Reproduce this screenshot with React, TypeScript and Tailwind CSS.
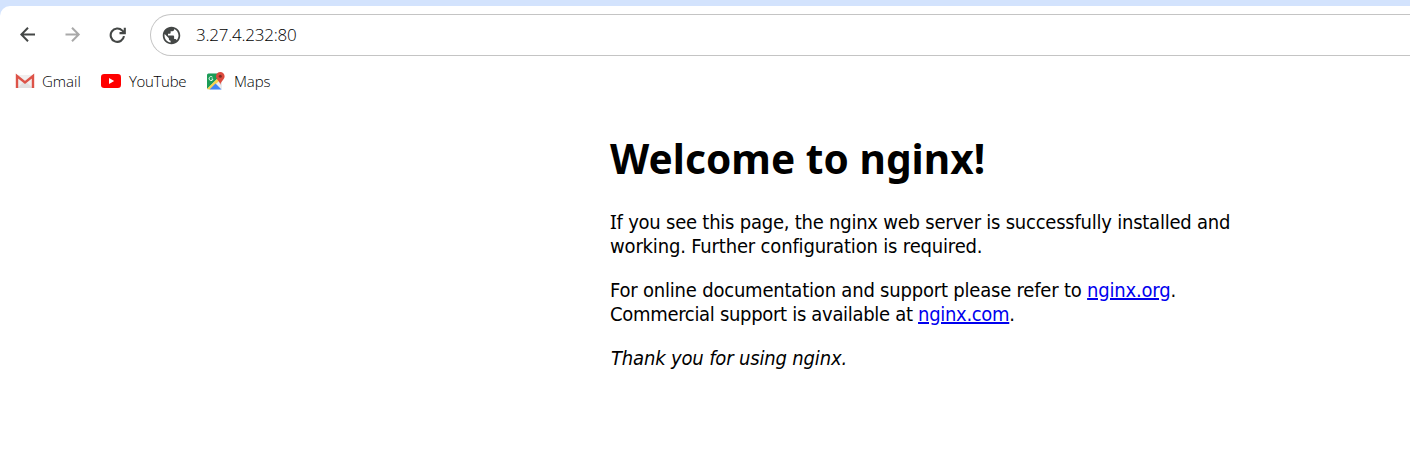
import React from "react";
import { MdPublic } from "react-icons/md";

const ui = "font-['Open_Sans','Noto_Sans',sans-serif]";

function Arrow({ flip, className }: { flip?: boolean; className: string }) {
  return (
    <svg width="16" height="16" viewBox="0 0 16 16" fill="none" stroke="currentColor" strokeWidth="2" className={className}>
      {flip ? <path d="M0.5 7.5H14M7 0.8L13.7 7.5L7 14.2" /> : <path d="M15 7.5H1.5M8 0.8L1.3 7.5L8 14.2" />}
    </svg>
  );
}

function Reload() {
  return (
    <svg width="17" height="17" viewBox="0 0 17 17" fill="none" stroke="currentColor" strokeWidth="2.1" className="text-[#444746]">
      <path d="M15 9.2A6.7 6.7 0 1 1 13.3 3.6L15 5.3" />
      <path d="M15.8 0.8V6.1H10.5" />
    </svg>
  );
}

function Gmail() {
  return (
    <svg width="20" height="16" viewBox="0 0 20 16">
      <path d="M2 2H18V15H2Z" fill="#f1efef" />
      <path d="M2 15L10 8L18 15Z" fill="#e2e0e0" />
      <path d="M2 15V3L10 9.5L18 3V15" fill="none" stroke="#dd5348" strokeWidth="2.4" />
    </svg>
  );
}

function YouTube() {
  return (
    <svg width="20" height="14" viewBox="0 0 20 14">
      <rect width="20" height="14" rx="3.2" fill="#f00" />
      <path d="M8 4V10L13.2 7Z" fill="#fff" />
    </svg>
  );
}

function Maps() {
  return (
    <svg width="20" height="20" viewBox="0 0 20 20">
      <path d="M1 4Q1 2.5 2.5 2.5H16V18.5H1Z" fill="#e8eaed" />
      <path d="M1 4Q1 2.5 2.5 2.5H12V7L1 18Z" fill="#1c9c57" />
      <path d="M1 18L11.5 7.5L13.5 9.5L4 18.5Z" fill="#fbd34b" />
      <path d="M3.5 18.5L9.5 12.5L15.5 18.5Z" fill="#4285f4" />
      <path d="M14.3 14C14 10 10 9 10 5.3A4.3 4.3 0 0 1 18.6 5.3C18.6 9 14.7 10 14.3 14Z" fill="#dd4b3e" />
      <circle cx="14.3" cy="5.2" r="1.5" fill="#7c2b23" />
      <path d="M6.5 6.2A2 2 0 1 0 7 8H5.5" fill="none" stroke="#e6f5ec" strokeWidth="1" />
    </svg>
  );
}

export default function App() {
  return (
    <div className="h-[459px] w-[1410px] overflow-hidden bg-[#d3e3fd] pt-[6px]">
      <div className="h-full rounded-tl-[10px] bg-white">
        <div className="flex h-[58px] items-center pl-5">
          <Arrow className="text-[#444746]" />
          <Arrow flip className="ml-[29px] text-[#a9a9a9]" />
          <div className="ml-7"><Reload /></div>
          <div className={`ml-6 flex h-[42px] flex-1 items-center rounded-l-full border border-r-0 border-[#c4c4c4] pl-[10px] ${ui}`}>
            <MdPublic size={21} color="#444746" />
            <span className="ml-[14px] text-[17px] font-light leading-5 tracking-[-0.23px] text-black">3.27.4.232:80</span>
          </div>
        </div>
        <div className={`flex h-[34px] items-center pl-[15px] text-[15px] font-light leading-5 text-black ${ui}`}>
          <Gmail />
          <span className="ml-[7px] w-[39px] whitespace-nowrap">Gmail</span>
          <div className="ml-5"><YouTube /></div>
          <span className="ml-[8px] w-[57px] whitespace-nowrap tracking-[-0.33px]">YouTube</span>
          <div className="ml-5"><Maps /></div>
          <span className="ml-[8px] whitespace-nowrap tracking-[-0.1px]">Maps</span>
        </div>
        <main className="ml-[610px] mt-[37px] whitespace-nowrap font-['DejaVu_Sans_Condensed','DejaVu_Sans',sans-serif] text-[20px] leading-6 text-black [font-stretch:condensed]">
          <h1 className="font-['Noto_Sans',sans-serif] text-[40.6px] font-bold leading-[48px] tracking-[0.05px] [font-stretch:normal]">Welcome to nginx!</h1>
          <p className="mt-[27px]">
            <span className="block tracking-[-0.23px]"><span className="font-['Noto_Sans',sans-serif] leading-none [font-stretch:normal]">I</span>f you see this page, the nginx web server is successfully installed and</span>
            <span className="block tracking-[-0.17px]">working. Further configuration is required.</span>
          </p>
          <p className="mt-5">
            <span className="block tracking-[-0.2px]">For online documentation and support please refer to <a className="text-[#0000ee] underline">nginx.org</a>.</span>
            <span className="block tracking-[-0.31px]">Commercial support is available at <a className="text-[#0000ee] underline">nginx.com</a>.</span>
          </p>
          <p className="mt-5 pl-px italic tracking-[-0.16px]">Thank you for using nginx.</p>
        </main>
      </div>
    </div>
  );
}
